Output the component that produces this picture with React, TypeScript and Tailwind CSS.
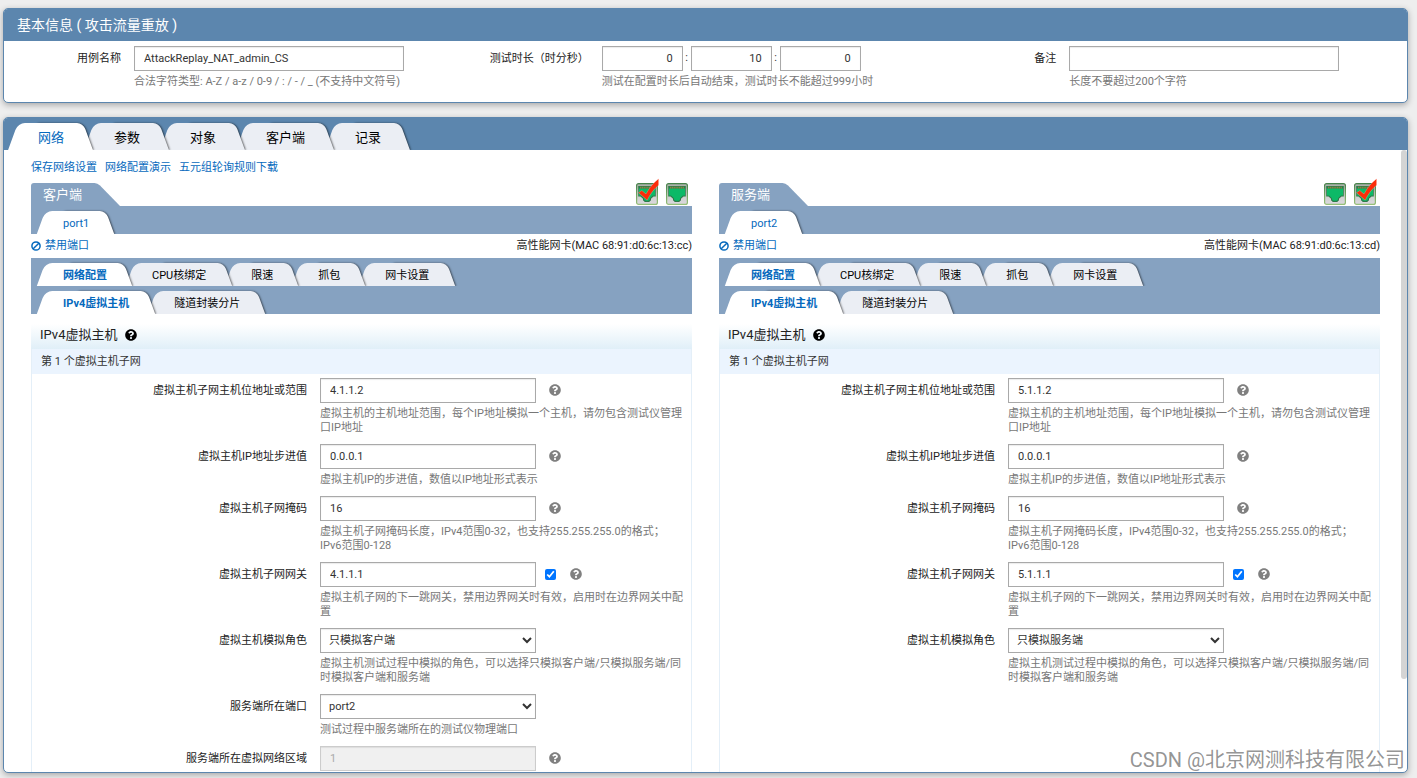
import { useId, useState, type ReactNode } from "react";
import { FaQuestionCircle } from "react-icons/fa";

const inputBase =
  "h-[25px] border border-[#a9a9a9] bg-white text-[11px] text-[#333] shadow-[inset_0_1px_1px_rgba(0,0,0,0.08)] outline-none";

function Tab({
  label,
  active,
  onClick,
  size,
  order,
  bold,
}: {
  label: string;
  active: boolean;
  onClick: () => void;
  size: "lg" | "sm";
  order: number;
  bold?: boolean;
}) {
  const fill = active ? "bg-white" : "bg-[#ebeef4]";
  return (
    <button
      type="button"
      role="tab"
      aria-selected={active}
      onClick={onClick}
      style={{ zIndex: 10 - order }}
      className={`relative shrink-0 whitespace-nowrap ${
        size === "lg" ? "h-[27px] px-[25px] pt-[2px] text-[13px]" : "mr-px h-[23px] px-[22px] pt-[3px] text-[11px]"
      } ${active ? "text-[#0569bd]" : "text-black"} ${active && bold ? "font-bold" : ""}`}
    >
      <span
        className={`absolute inset-y-0 right-px left-1/3 skew-x-[20deg] rounded-t-[6px] shadow-[1px_0_2px_rgba(0,0,0,0.55)] ${fill}`}
      />
      <span className={`absolute inset-y-0 left-0 w-3/4 -skew-x-[20deg] rounded-tl-[7px] ${fill}`} />
      <span className="relative">{label}</span>
    </button>
  );
}

function TabStrip({ tabs, size, bold }: { tabs: string[]; size: "lg" | "sm"; bold?: boolean }) {
  const [current, setCurrent] = useState(0);
  return (
    <div
      role="tablist"
      className={`relative isolate flex items-end overflow-hidden ${
        size === "lg" ? "h-[33px] shrink-0 bg-[#5c86ae] pl-[9px]" : "h-7 bg-[#86a2c1] pl-[10px]"
      }`}
    >
      {tabs.map((t, i) => (
        <Tab key={t} label={t} active={i === current} onClick={() => setCurrent(i)} size={size} order={i} bold={bold} />
      ))}
    </div>
  );
}

function PortIcon({ checked }: { checked: boolean }) {
  const id = useId();
  return (
    <svg viewBox="0 0 22 22" className="size-[22px] overflow-visible">
      <defs>
        <linearGradient id={id} x1="0" y1="0" x2="0" y2="1">
          <stop offset="0" stopColor="#a3ada3" />
          <stop offset="0.5" stopColor="#c9cdc9" />
          <stop offset="1" stopColor="#dcd9df" />
        </linearGradient>
        <linearGradient id={id + "b"} x1="0" y1="0" x2="0" y2="1">
          <stop offset="0" stopColor="#47824b" />
          <stop offset="1" stopColor="#96c078" />
        </linearGradient>
      </defs>
      <rect x="0.6" y="0.6" width="20.8" height="20.8" rx="2" fill={`url(#${id})`} stroke={`url(#${id}b)`} strokeWidth="1.2" />
      <path d="M2.2 3h17.6v10.500h-2.300l-2.500 2.300v1.400l-1.800 1.800h-4.400l-1.800-1.800v-1.400l-2.500-2.300H2.200z" fill="#2f7a4a" />
      <path d="M3 5.600h16v6.800h-2l-3 2.800v1.400l-1.300 1.200H9.300L8 16.600v-1.400l-3-2.800H3z" fill="#0cb967" />
      <path d="M4 4.600h14" stroke="#8c8444" strokeWidth="1.800" strokeDasharray="1.300 0.500" />
      {checked && (
        <path
          d="M2.500 9.700l3.300-2.200 4.200 3.400C13 5.500 17.500-0.500 22.600-4.200v6.500C18.300 5.500 14 11.500 11.200 17.200z"
          fill="#fb2c0a"
          stroke="#fff"
          strokeOpacity="0.5"
          strokeWidth="0.4"
        />
      )}
    </svg>
  );
}

function BanIcon() {
  return (
    <svg viewBox="0 0 10 10" className="size-[10px]" fill="none" stroke="currentColor" strokeWidth="1.5">
      <circle cx="5" cy="5" r="4.1" />
      <path d="M2.2 7.800L7.800 2.200" />
    </svg>
  );
}

function Hint() {
  return (
    <button type="button" aria-label="?" className="text-[#808080]">
      <FaQuestionCircle className="size-3" />
    </button>
  );
}

function TopField({ label, help, htmlFor, children }: { label: string; help: string; htmlFor: string; children: ReactNode }) {
  return (
    <div className="flex gap-[13px]">
      <label htmlFor={htmlFor} className="w-[117px] shrink-0 text-right text-[11px] leading-[25px] text-[#222]">
        {label}
      </label>
      <div>
        {children}
        <p className="mt-1 text-[11px] leading-[14px] text-[#777]">{help}</p>
      </div>
    </div>
  );
}

type Field = {
  label: string;
  value: string;
  help?: string;
  kind?: "text" | "select" | "disabled";
  options?: string[];
  check?: boolean;
};

function FieldRow({ field }: { field: Field }) {
  const id = useId();
  const kind = field.kind ?? "text";
  return (
    <div className="flex gap-[13px]">
      <label htmlFor={id} className="w-[275px] shrink-0 text-right text-[11px] leading-[25px] text-[#222]">
        {field.label}
      </label>
      <div className="w-[364px] shrink-0">
        <div className="flex items-center">
          {kind === "select" ? (
            <select id={id} defaultValue={field.value} className={`${inputBase} w-[216px] px-1`}>
              {field.options?.map((o) => (
                <option key={o}>{o}</option>
              ))}
            </select>
          ) : (
            <input
              id={id}
              type="text"
              defaultValue={field.value}
              disabled={kind === "disabled"}
              className={`${inputBase} w-[216px] px-[9px] disabled:border-[#ccc] disabled:bg-[#f0f0f0] disabled:text-[#aaa]`}
            />
          )}
          {field.check && (
            <input type="checkbox" defaultChecked aria-label={field.label} className="ml-[9px] size-[11px] accent-[#0075ff]" />
          )}
          {kind !== "select" && (
            <span className={`flex pb-[2px] ${field.check ? "ml-[14px]" : "ml-[13px]"}`}>
              <Hint />
            </span>
          )}
        </div>
        {field.help && <p className="mt-1 text-[11px] leading-[14px] text-[#777]">{field.help}</p>}
      </div>
    </div>
  );
}

function Panel({ title, port, mac, checks, fields }: { title: string; port: string; mac: string; checks: boolean[]; fields: Field[] }) {
  return (
    <section className="min-w-0">
      <div className="flex items-end justify-between">
        <div className="flex">
          <h2 className="h-[23px] rounded-tl-[3px] bg-[#86a2c1] pl-3 text-[13px] leading-[24px] text-white">{title}</h2>
          <svg viewBox="0 0 38 23" className="h-[23px] w-[38px]" fill="#86a2c1">
            <path d="M0 0h12.500q3 0 5.500 2.500L38 23H0z" />
          </svg>
        </div>
        <div className="mr-1 flex gap-2 pb-px">
          {checks.map((c, i) => (
            <button key={i} type="button" aria-label={`port${i + 1}`} className="block">
              <PortIcon checked={c} />
            </button>
          ))}
        </div>
      </div>
      <TabStrip tabs={[port]} size="sm" />
      <div className="flex h-6 items-center justify-between text-[11px] leading-[22px]">
        <a href="#" className="flex items-center gap-1 text-[#0569bd]">
          <BanIcon />
          禁用端口
        </a>
        <span className="text-[#222]">{mac}</span>
      </div>
      <TabStrip tabs={["网络配置", "CPU核绑定", "限速", "抓包", "网卡设置"]} size="sm" bold />
      <TabStrip tabs={["IPv4虚拟主机", "隧道封装分片"]} size="sm" bold />
      <div className="mt-[10px] flex h-[25px] items-center gap-2 bg-linear-to-b from-white to-[#e0eff8] pb-[3px] pl-[9px]">
        <h3 className="text-[13px] leading-[22px] text-[#222]">IPv4虚拟主机</h3>
        <FaQuestionCircle className="size-3 text-black" />
      </div>
      <div className="border-x border-[#e4eff8]">
        <h4 className="h-[25px] bg-[#ebf4fe] pl-[9px] text-[11px] leading-[25px] text-[#333]">第 1 个虚拟主机子网</h4>
        <div className="flex flex-col gap-[9px] pt-1 pb-28">
          {fields.map((f) => (
            <FieldRow key={f.label} field={f} />
          ))}
        </div>
      </div>
    </section>
  );
}

function hostFields(net: string, role: string): Field[] {
  return [
    {
      label: "虚拟主机子网主机位地址或范围",
      value: `${net}.1.1.2`,
      help: "虚拟主机的主机地址范围，每个IP地址模拟一个主机，请勿包含测试仪管理口IP地址",
    },
    { label: "虚拟主机IP地址步进值", value: "0.0.0.1", help: "虚拟主机IP的步进值，数值以IP地址形式表示" },
    {
      label: "虚拟主机子网掩码",
      value: "16",
      help: "虚拟主机子网掩码长度，IPv4范围0-32，也支持255.255.255.0的格式；IPv6范围0-128",
    },
    {
      label: "虚拟主机子网网关",
      value: `${net}.1.1.1`,
      help: "虚拟主机子网的下一跳网关，禁用边界网关时有效，启用时在边界网关中配置",
      check: true,
    },
    {
      label: "虚拟主机模拟角色",
      value: role,
      kind: "select",
      options: ["只模拟客户端", "只模拟服务端"],
      help: "虚拟主机测试过程中模拟的角色，可以选择只模拟客户端/只模拟服务端/同时模拟客户端和服务端",
    },
  ];
}

const clientFields: Field[] = [
  ...hostFields("4", "只模拟客户端"),
  {
    label: "服务端所在端口",
    value: "port2",
    kind: "select",
    options: ["port1", "port2"],
    help: "测试过程中服务端所在的测试仪物理端口",
  },
  { label: "服务端所在虚拟网络区域", value: "1", kind: "disabled" },
];

const card =
  "overflow-hidden rounded-[5px] border border-[#5c86ae] bg-white shadow-[0_2px_6px_rgba(0,0,0,0.3)]";

export default function App() {
  return (
    <div className="relative flex h-screen flex-col gap-[14px] overflow-hidden bg-[#eee] pt-2 pr-[9px] pb-[5px] pl-[3px] font-['Roboto','Noto_Sans_CJK_SC',sans-serif]">
      <section className={`${card} shrink-0`}>
        <h1 className="-mt-px h-[33px] bg-[#5c86ae] pl-[13px] text-[14px] leading-[35px] text-white">
          基本信息 ( 攻击流量重放 )
        </h1>
        <div className="grid grid-cols-3 pt-[5px] pb-[13px]">
          <TopField label="用例名称" htmlFor="case-name" help="合法字符类型: A-Z / a-z / 0-9 / : / - / _ (不支持中文符号)">
            <input id="case-name" type="text" defaultValue="AttackReplay_NAT_admin_CS" className={`${inputBase} block w-[270px] px-[9px]`} />
          </TopField>
          <TopField label="测试时长（时分秒）" htmlFor="hours" help="测试在配置时长后自动结束，测试时长不能超过999小时">
            <div className="flex items-center text-[11px] text-[#333]">
              <input id="hours" aria-label="时" type="text" defaultValue="0" className={`${inputBase} w-[81px] px-[9px] text-right`} />
              <span className="w-2 text-center">:</span>
              <input aria-label="分" type="text" defaultValue="10" className={`${inputBase} w-[81px] px-[9px] text-right`} />
              <span className="w-2 text-center">:</span>
              <input aria-label="秒" type="text" defaultValue="0" className={`${inputBase} w-[81px] px-[9px] text-right`} />
            </div>
          </TopField>
          <TopField label="备注" htmlFor="remark" help="长度不要超过200个字符">
            <input id="remark" type="text" className={`${inputBase} block w-[270px] px-[9px]`} />
          </TopField>
        </div>
      </section>

      <section className={`${card} relative flex min-h-0 flex-1 flex-col`}>
        <div className="-mt-px">
          <TabStrip tabs={["网络", "参数", "对象", "客户端", "记录"]} size="lg" />
        </div>
        <div className="relative min-h-0 flex-1">
          <div className="h-full overflow-y-auto px-[27px] [scrollbar-width:none]">
            <nav className="flex h-[33px] items-center gap-2 pt-[3px] text-[11px] text-[#0569bd]">
              <a href="#">保存网络设置</a>
              <a href="#">网络配置演示</a>
              <a href="#">五元组轮询规则下载</a>
            </nav>
            <div className="grid grid-cols-2 gap-[27px]">
              <Panel title="客户端" port="port1" mac="高性能网卡(MAC 68:91:d0:6c:13:cc)" checks={[true, false]} fields={clientFields} />
              <Panel
                title="服务端"
                port="port2"
                mac="高性能网卡(MAC 68:91:d0:6c:13:cd)"
                checks={[false, true]}
                fields={hostFields("5", "只模拟服务端")}
              />
            </div>
          </div>
          <div className="absolute top-0 right-0 h-[85%] w-[6px] rounded-[3px] bg-[#d4d4d4]" />
        </div>
      </section>
      <p className="absolute right-3 bottom-[5px] text-[20px] leading-[26px] text-[#888]/90">CSDN @北京网测科技有限公司</p>
    </div>
  );
}
